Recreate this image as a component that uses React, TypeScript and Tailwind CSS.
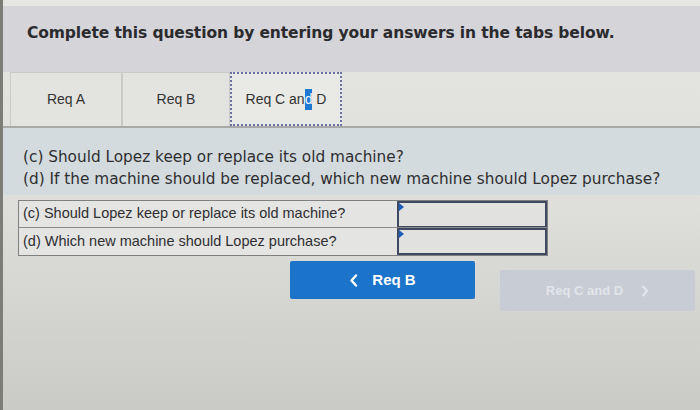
import React from 'react';

const tabs = [
  { label: 'Req A', width: 'w-[112px]' },
  { label: 'Req B', width: 'w-[108px]' },
];

const rows = [
  '(c) Should Lopez keep or replace its old machine?',
  '(d) Which new machine should Lopez purchase?',
];

export default function App() {
  return (
    <div className="w-[700px] h-[410px] overflow-hidden border-l-[3px] border-[#7d7d78] bg-gradient-to-b from-[#e6e6e3] via-[#dededb] to-[#cacbc7] font-['DejaVu_Sans',sans-serif]">
      {/* Header band */}
      <div className="mt-[6px] h-[66px] bg-[#d4d4d9] pl-[24px] pt-[17px]">
        <h1 className="text-[15.5px] font-bold leading-[20px] text-[#2b2b2e] tracking-[-0.1px]">
          Complete this question by entering your answers in the tabs below.
        </h1>
      </div>

      {/* Tabs */}
      <div className="flex h-[56px] pl-[7px] border-b-2 border-[#a9aaa8]">
        {tabs.map((t) => (
          <div
            key={t.label}
            className={`${t.width} flex items-center justify-center border border-b-0 border-[#c9c9c6] bg-[#e3e3e0] font-['Liberation_Sans',sans-serif] text-[14px] text-[#333]`}
          >
            {t.label}
          </div>
        ))}
        <div className="w-[112px] flex items-center justify-center border-2 border-dotted border-[#6a70a0] bg-[#e9e9e6] font-['Liberation_Sans',sans-serif] text-[14px] text-[#333]">
          Req C an<span className="bg-[#1f78d1] text-[#f2f6ff]">d</span>&nbsp;D
        </div>
      </div>

      {/* Question text */}
      <div className="h-[67px] bg-[#d3dbde] pl-[20px] pt-[18px] text-[15.3px] leading-[22px] text-[#2e2e30]">
        <p>(c) Should Lopez keep or replace its old machine?</p>
        <p>(d) If the machine should be replaced, which new machine should Lopez purchase?</p>
      </div>

      {/* Answer table */}
      <div className="ml-[15px] mt-[5px] w-[530px] border border-[#7f8080]">
        {rows.map((r, i) => (
          <div key={r} className={`flex h-[27px] ${i === 0 ? 'border-b border-[#8a8a8a]' : ''}`}>
            <div className="w-[378px] flex items-center pl-[4px] font-['Liberation_Sans',sans-serif] text-[14.5px] text-[#2f2f32] bg-[#e4e4e2]">
              {r}
            </div>
            <div className={`relative flex-1 border-2 border-[#3f4a62] bg-[#e1e1df] ${i === 0 ? 'border-b' : ''}`}>
              <span className="absolute left-0 top-0 h-0 w-0 border-t-[4px] border-b-[4px] border-l-[5px] border-t-transparent border-b-transparent border-l-[#1c5fb8]" />
            </div>
          </div>
        ))}
      </div>

      {/* Navigation buttons */}
      <div className="flex items-start pl-[287px] pt-[5px] gap-[25px]">
        <button className="w-[185px] h-[38px] flex items-center justify-center gap-[14px] rounded-[2px] bg-[#1b74c9] font-['Liberation_Sans',sans-serif] text-[15px] font-bold text-white">
          <svg width="9" height="13" viewBox="0 0 9 13" fill="none">
            <path d="M7 1.5 L2.5 6.5 L7 11.5" stroke="white" strokeWidth="2.4" strokeLinecap="round" strokeLinejoin="round" />
          </svg>
          <span>Req B</span>
        </button>
        <button className="mt-[9px] w-[195px] h-[41px] flex items-center justify-center gap-[18px] rounded-[2px] bg-[#c8ccd4] font-['Liberation_Sans',sans-serif] text-[13px] font-bold text-[#e2e5ea]">
          <span>Req C and D</span>
          <svg width="8" height="12" viewBox="0 0 8 12" fill="none">
            <path d="M2 1.5 L6 6 L2 10.5" stroke="#e2e5ea" strokeWidth="2.2" strokeLinecap="round" strokeLinejoin="round" />
          </svg>
        </button>
      </div>
    </div>
  );
}
